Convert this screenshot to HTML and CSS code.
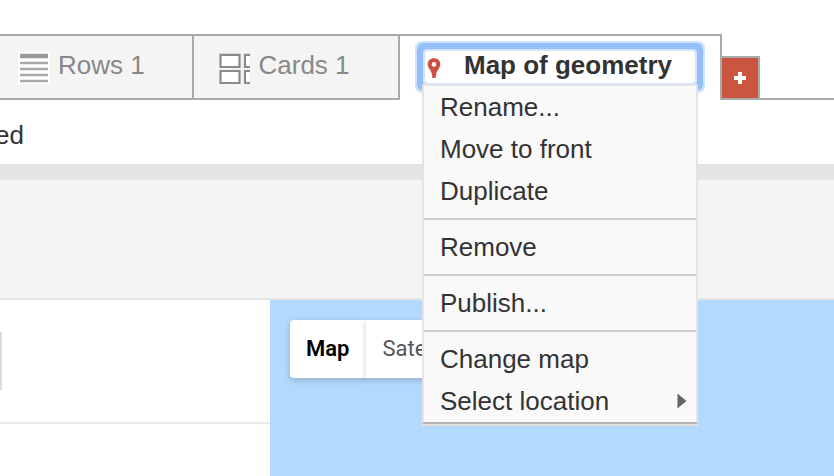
FILE: index.html
```html
<!DOCTYPE html>
<html lang="en">
<head>
<meta charset="utf-8">
<title>Map of geometry</title>
<link rel="stylesheet" href="styles.css">
</head>
<body>
<nav class="tabs">
  <div class="tab tab-rows">
    <svg class="rows-icon" width="32" height="32" viewBox="0 0 32 32"><path fill="#fff" d="M0 0h32v32H0z"/><path stroke="#999" stroke-width="4.500" d="M2 4h28"/><path stroke="#aaa" stroke-width="2.600" d="M2 11h28M2 17h28M2 23h28M2 29h28"/></svg>
    <span>Rows 1</span>
  </div>
  <div class="tab tab-cards">
    <svg class="cards-icon" width="31" height="32" viewBox="0 0 31 32"><g fill="#fff" stroke="#8b8b8b" stroke-width="2.200"><path d="M1.500 2.800h19v12.200h-19zM1.500 19h19v12h-19zM26 2.800h19v12.200H26zM26 19h19v12H26z"/></g></svg>
    <span>Cards 1</span>
  </div>
  <div class="tab-active">
    <div class="focus">
      <svg class="pin" width="14" height="21" viewBox="0 0 14 21"><path fill="#cb5040" fill-rule="evenodd" d="M7 .2C3 .2.7 2.800.7 6.200c0 2.600 1.500 4.300 2.600 6C4.700 14.500 5.200 17 5.400 20h3.200c.2-3 .7-5.500 2.100-7.800 1.100-1.700 2.600-3.400 2.600-6C13.300 2.800 11 .2 7 .2zM7 4.100a2.300 2.300 0 1 0 0 4.600A2.300 2.300 0 1 0 7 4.100z"/></svg>
      <span>Map of geometry</span>
    </div>
    <div class="menu">
      <div class="group"><div>Rename...</div><div>Move to front</div><div>Duplicate</div></div>
      <div class="group"><div>Remove</div></div>
      <div class="group"><div>Publish...</div></div>
      <div class="group"><div>Change map</div><div class="submenu">Select location<svg width="10" height="14" viewBox="0 0 10 14"><path fill="#aaa" d="M0 0h2v14H0z"/><path fill="#666" d="M1 0l8.500 7L1 14z"/></svg></div></div>
    </div>
  </div>
  <div class="add"><svg width="12" height="12" viewBox="0 0 12 12"><path fill="none" stroke="#fff" stroke-width="4" d="M6 0v12M0 6h12"/></svg></div>
  <div class="rule"></div>
</nav>
<div class="status">ed</div>
<div class="toolbar"></div>
<main class="content">
  <aside class="side"><div class="filter"><div class="field"></div></div></aside>
  <section class="map">
    <div class="map-type"><div class="choice chosen">Map</div><div class="choice">Satellite</div></div>
  </section>
</main>
</body>
</html>
```
FILE: styles.css
```css
* { box-sizing: border-box; }
body {
  margin: 0;
  padding-top: 34px;
  height: 476px;
  overflow: hidden;
  background: #fff;
  color: #333;
  font: 26px/42px "Liberation Sans", Arial, sans-serif;
}
svg { display: block; flex: none; }
.tabs { display: flex; height: 66px; }
.tab {
  display: flex;
  border: 2px solid #aaa;
  border-left: 0;
  background: #f4f4f4;
  color: #888;
  white-space: nowrap;
}
.tab span { margin-top: 8px; }
.tab-rows { width: 194px; padding-left: 18px; }
.rows-icon { margin: 16px 8px 0 0; }
.tab-cards { width: 206px; padding-left: 25px; }
.cards-icon { margin: 16px 8.5px 0 0; }
.tab-active {
  position: relative;
  width: 322px;
  padding: 15px 0 0 25px;
  border: 2px solid #aaa;
  border-width: 2px 2px 0 0;
}
.focus {
  display: flex;
  width: 270px;
  height: 32px;
  color: #333;
  font-weight: bold;
  line-height: 32px;
  white-space: nowrap;
  border-radius: 2px;
  box-shadow: 0 0 0 2px #d3e4fc, 0 0 0 8px #94bffb, 0 0 0 10px #cfe2fd;
}
.pin { margin: 7px 23px 0 2px; }
.focus span { margin-top: -2px; }
.menu {
  position: absolute;
  z-index: 1;
  top: 48px;
  left: 22px;
  width: 276px;
  border: 2px solid #e4e4e4;
  border-bottom-color: #b3b3b3;
  background: #f9f9f9;
  box-shadow: 0 2px 0 #dfdfdf;
}
.group { padding: 6px 0 6px 16px; }
.group:first-child { padding-top: 0; }
.group:last-child { padding-bottom: 0; }
.group + .group { border-top: 2px solid #ccc; }
.submenu {
  display: flex;
  align-items: center;
  justify-content: space-between;
  padding-right: 9px;
}
.add {
  display: flex;
  align-items: center;
  justify-content: center;
  align-self: flex-end;
  width: 38px;
  height: 44px;
  border: 2px solid #aaa;
  border-left: 0;
  background: #cc5541;
}
.rule { flex: 1; border-bottom: 2px solid #aaa; }
.status { height: 64px; padding-top: 14px; margin-left: -5px; }
.toolbar {
  height: 136px;
  border-top: 16px solid #e4e4e4;
  border-bottom: 2px solid #e4e4e4;
  background: #f4f4f4;
}
.content { display: flex; height: 176px; }
.side { width: 270px; }
.filter { height: 124px; padding-top: 32px; border-bottom: 2px solid #ebebeb; }
.field { width: 2px; height: 58px; background: #dadada; }
.map { flex: 1; padding: 20px; background: #b3d9fc; }
.map-type {
  display: flex;
  width: max-content;
  height: 58px;
  font: 22px/58px Roboto, sans-serif;
}
.choice {
  padding: 0 16px 0 16.5px;
  background: #fff;
  color: #565656;
  box-shadow: 0 2px 6px rgba(0, 0, 0, .2);
}
.chosen {
  width: 76px;
  padding: 0 16px;
  border-radius: 4px 0 0 4px;
  color: #000;
  font-weight: 600;
}
```
